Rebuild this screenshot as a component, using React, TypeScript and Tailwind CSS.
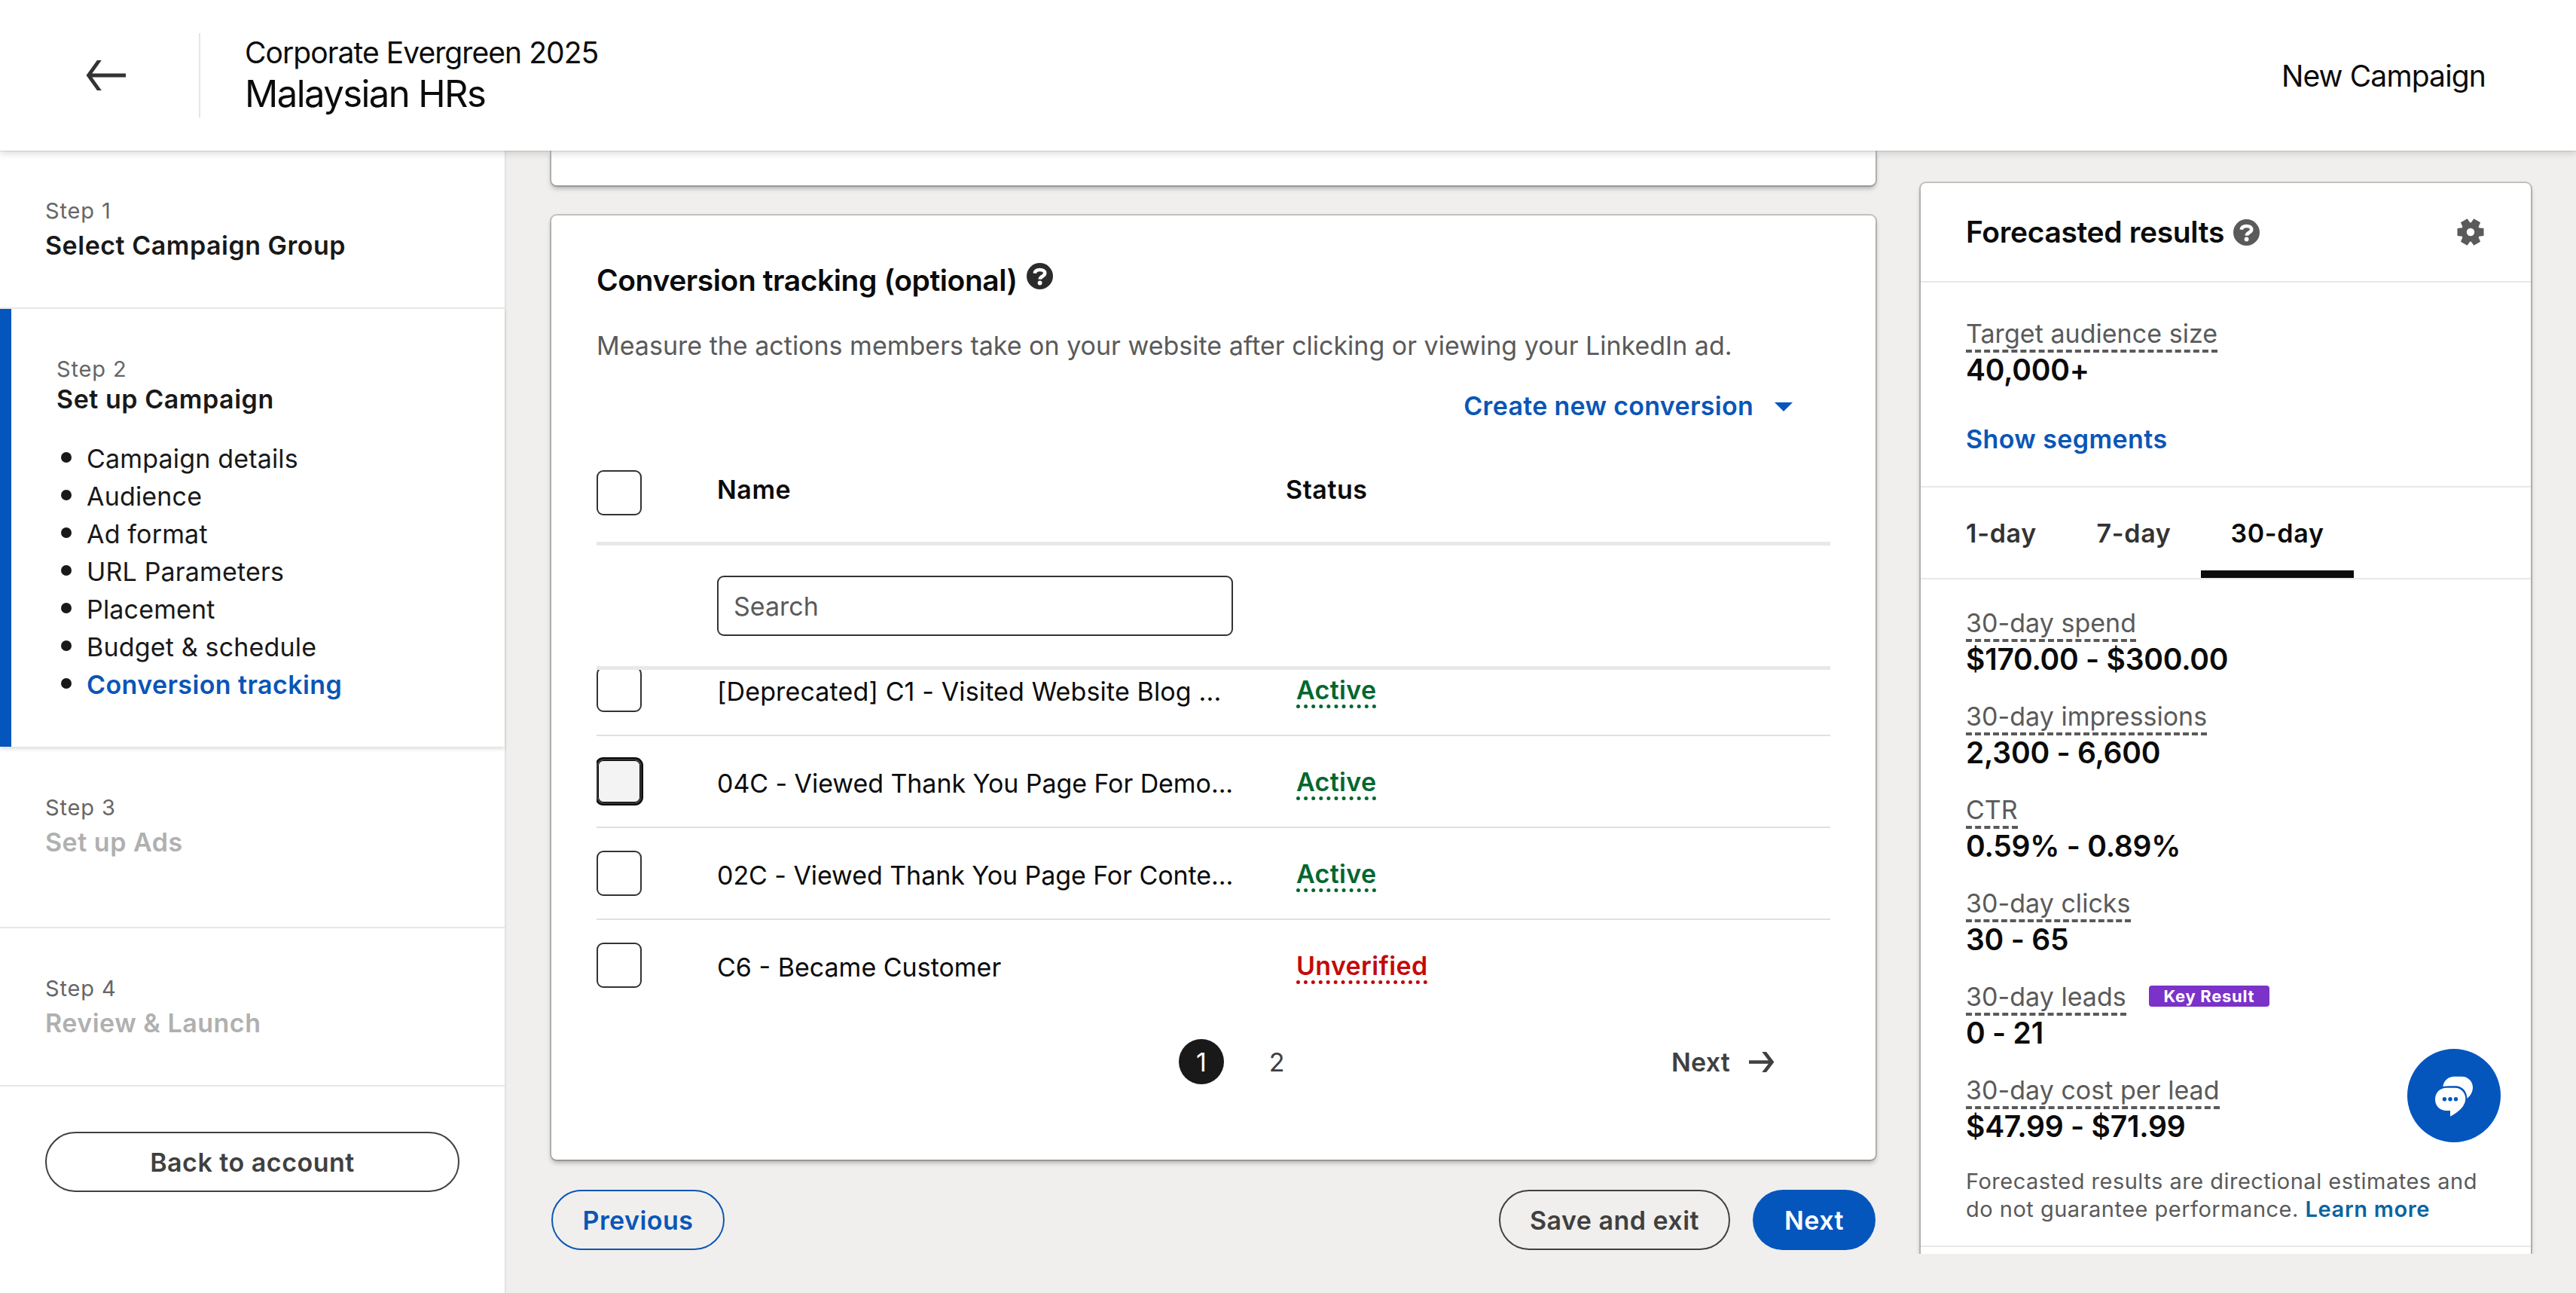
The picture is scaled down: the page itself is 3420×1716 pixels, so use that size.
import React from 'react';
import clsx from 'clsx';

const SECTIONS = [
  'Campaign details',
  'Audience',
  'Ad format',
  'URL Parameters',
  'Placement',
  'Budget & schedule',
  'Conversion tracking',
];

interface Conversion {
  name: string;
  status: 'Active' | 'Unverified';
  focused?: boolean;
}

const CONVERSIONS: Conversion[] = [
  { name: '[Deprecated] C1 - Visited Website Blog ...', status: 'Active' },
  { name: '04C - Viewed Thank You Page For Demo...', status: 'Active', focused: true },
  { name: '02C - Viewed Thank You Page For Conte...', status: 'Active' },
  { name: 'C6 - Became Customer', status: 'Unverified' },
];

interface Metric {
  label: string;
  value: string;
  badge?: string;
}

const METRICS: Metric[] = [
  { label: '30-day spend', value: '$170.00 - $300.00' },
  { label: '30-day impressions', value: '2,300 - 6,600' },
  { label: 'CTR', value: '0.59% - 0.89%' },
  { label: '30-day clicks', value: '30 - 65' },
  { label: '30-day leads', value: '0 - 21', badge: 'Key Result' },
  { label: '30-day cost per lead', value: '$47.99 - $71.99' },
];

const CARD_SHADOW = 'shadow-[0_0_0_2px_rgba(0,0,0,0.18),0_4px_6px_rgba(0,0,0,0.28)]';

const HelpIcon: React.FC<{ className?: string }> = ({ className }) => (
  <svg viewBox="0 0 35 35" className={clsx('size-[35px] shrink-0', className)}>
    <circle cx="17.5" cy="17.5" r="17.5" fill="currentColor" />
    <path d="M10.8 13.8C11.2 10.4 13.8 9 17.6 9c3.9 0 6.6 1.7 6.6 4.7 0 4-6.4 3.9-6.5 7.9" fill="none" stroke="#fff" strokeWidth="4.6" />
    <circle cx="17.6" cy="26.5" r="2.9" fill="#fff" />
  </svg>
);

const GearIcon = () => (
  <svg viewBox="0 0 36 36" className="size-9 text-[#5a5a5a]">
    <g fill="currentColor">
      <circle cx="18" cy="18" r="12.6" />
      <path d="M.5 13 10 12h16l9.5 1v10l-9.5 1H10l-9.5-1z" />
      <path d="M.5 13 10 12h16l9.5 1v10l-9.5 1H10l-9.5-1z" transform="rotate(60 18 18)" />
      <path d="M.5 13 10 12h16l9.5 1v10l-9.5 1H10l-9.5-1z" transform="rotate(120 18 18)" />
    </g>
    <circle cx="18" cy="18" r="5.2" fill="#fff" />
  </svg>
);

const ChatIcon = () => (
  <svg viewBox="0 0 124 124" className="size-[124px]">
    <g fill="#fff">
      <path d="M47.3 50C48.5 42 54.5 36.7 62.5 36.7h10C80.5 36.7 87 43 87 51c0 6-3 11-7.5 14.7C79 56 73 49.3 64 49.3h-8c-3 0-6 .2-8.7.7z" />
      <path d="M52 51.7h11.500C71 51.7 77.3 58 77.3 66c0 10-9.3 18-20.3 23.7V82h-5c-9 0-15-6.5-15-15 0-9 6.5-15.3 15-15.3z" />
    </g>
    <g fill="#0456bd">
      <circle cx="49.4" cy="66.7" r="2.7" />
      <circle cx="57" cy="66.7" r="2.7" />
      <circle cx="64.5" cy="66.7" r="2.7" />
    </g>
  </svg>
);

const Checkbox: React.FC<{ focused?: boolean }> = ({ focused }) => (
  <div
    className={clsx(
      'size-[60px] shrink-0 rounded-[9px] border-2 border-[#333]',
      focused && 'bg-[#f3f3f3] shadow-[0_0_0_2px_#0a0a0a,inset_0_0_0_1px_#0a0a0a]'
    )}
  />
);

const Header = () => (
  <header className="relative z-20 flex h-[200px] shrink-0 items-center bg-white pl-[114px] pr-[120px] shadow-[0_0_0_1px_rgba(0,0,0,0.1),0_4px_9px_rgba(0,0,0,0.14)]">
    <svg viewBox="0 0 53 40" className="h-10 w-[53px] text-[#333]" fill="none" stroke="currentColor" strokeWidth="4.8">
      <path d="M20-3 3.5 20 20 43M3 20h50" />
    </svg>
    <div className="ml-[97px] h-28 w-0.5 bg-[#e6e6e6]" />
    <div className="ml-[59px] text-[#0b0b0b]">
      <div className="text-[39px] leading-[50px] tracking-[-0.024em]">Corporate Evergreen 2025</div>
      <div className="text-[49px] leading-[60px] tracking-[-0.032em]">Malaysian HRs</div>
    </div>
    <div className="ml-auto pt-0.5 text-[39px] leading-[50px] tracking-[-0.022em] text-[#0b0b0b]">New Campaign</div>
  </header>
);

const StepText: React.FC<{ step: string; title: string; disabled?: boolean }> = ({ step, title, disabled }) => (
  <>
    <div className="text-[29px] leading-10 tracking-[0.03em] text-[#666]">{step}</div>
    <div className={clsx('text-[34px] font-semibold leading-[51px] tracking-[0.015em]', disabled ? 'text-[#b0b0b0]' : 'text-[#191919]')}>
      {title}
    </div>
  </>
);

const Sidebar = () => (
  <aside className="w-[670px] shrink-0 bg-white shadow-[0_0_0_2px_rgba(0,0,0,0.05)]">
    <div className="h-[210px] border-b-2 border-[#e8e8e8] pl-[60px] pt-[60px]">
      <StepText step="Step 1" title="Select Campaign Group" />
    </div>
    <div className="h-[581px] border-l-[15px] border-[#0456bd] pl-[60px] pt-[60px] shadow-[0_3px_5px_rgba(0,0,0,0.13)]">
      <div className="text-[29px] leading-10 tracking-[0.03em] text-[#666]">Step 2</div>
      <div className="text-[34px] font-semibold leading-[39px] tracking-[0.016em] text-[#191919]">Set up Campaign</div>
      <ul className="mt-[35px]">
        {SECTIONS.map((section) => (
          <li key={section} className="flex h-[50px] items-center text-[34px] leading-[50px] text-[#191919]">
            <span className="mb-1 ml-1.5 mr-5 size-3.5 rounded-full bg-[#191919]" />
            <span className={section === 'Conversion tracking' ? 'font-semibold tracking-[0.012em] text-[#0a56b6]' : 'tracking-[0.005em]'}>
              {section}
            </span>
          </li>
        ))}
      </ul>
    </div>
    <div className="h-[241px] border-b-2 border-[#e8e8e8] pl-[60px] pt-[61px]">
      <StepText step="Step 3" title="Set up Ads" disabled />
    </div>
    <div className="h-[210px] border-b-2 border-[#e8e8e8] pl-[60px] pt-[60px]">
      <StepText step="Step 4" title="Review & Launch" disabled />
    </div>
    <div className="px-[60px] pt-[60px]">
      <button className="h-20 w-full rounded-full border-2 border-[#404040] text-[34px] font-semibold tracking-[0.015em] text-[#404040]">
        Back to account
      </button>
    </div>
  </aside>
);

const ConversionTable = () => (
  <div className="mt-[60px]">
    <div className="grid h-[100px] grid-cols-[160px_755px_1fr] border-b-[5px] border-[#e8e8e8] text-[34px] font-semibold leading-[52px] tracking-[0.016em] text-[#0b0b0b]">
      <Checkbox />
      <span>Name</span>
      <span>Status</span>
    </div>
    <div className="h-[165px] border-b-[5px] border-[#e8e8e8] pl-40 pt-10">
      <input
        placeholder="Search"
        className="block h-20 w-[685px] rounded-[9px] border-2 border-[#333] pl-5 text-[34px] placeholder:text-[#5a5a5a]"
      />
    </div>
    {/* the list is scrolled a little, so the first row is cut at the top */}
    <div className="h-[454px] overflow-hidden">
      <div className="-mt-[34px]">
        {CONVERSIONS.map((row) => (
          <div
            key={row.name}
            className="grid h-[122px] grid-cols-[160px_769px_1fr] items-start border-b-2 border-[#e0e0e0] text-[34px] last:border-transparent"
          >
            <div className="pt-[30px]">
              <Checkbox focused={row.focused} />
            </div>
            <span
              className={clsx(
                'whitespace-nowrap pt-[38px] leading-[50px] text-[#0b0b0b]',
                row.name.startsWith('[') ? 'tracking-[0.004em]' : row.name.endsWith('...') && 'tracking-[-0.002em]'
              )}
            >
              {row.name}
            </span>
            <span
              className={clsx(
                'mt-[41px] justify-self-start border-b-[5px] border-dotted font-semibold leading-[39px] tracking-[0.010em]',
                row.status === 'Active' ? 'border-[#01672f] text-[#01672f]' : 'border-[#c30a0a] text-[#c30a0a]'
              )}
            >
              {row.status}
            </span>
          </div>
        ))}
      </div>
    </div>
    <div className="mt-9 flex h-[60px] items-center pl-[773px] pr-[74px] text-[34px] text-[#404040]">
      <span className="flex size-[60px] items-center justify-center rounded-full bg-[#191919] text-white">1</span>
      <span className="ml-10 flex size-[60px] items-center justify-center">2</span>
      <span className="ml-auto font-semibold tracking-[0.006em]">Next</span>
      <svg viewBox="0 0 34 27" className="ml-[25px] h-[27px] w-[34px]" fill="none" stroke="currentColor" strokeWidth="4.6">
        <path d="M0 13.5h31M19-1.500l11.500 15L19 28.5" />
      </svg>
    </div>
  </div>
);

const MainColumn = () => (
  <main className="ml-[62px] w-[1758px] shrink-0">
    <div className={clsx('h-[46px] rounded-b-[7px] bg-white', CARD_SHADOW)} />
    <section className={clsx('mt-10 h-[1253px] rounded-[7px] bg-white px-[60px] pt-[61px]', CARD_SHADOW)}>
      <div className="flex items-center">
        <h2 className="text-[39px] font-semibold leading-[50px] tracking-[-0.011em] text-[#0b0b0b]">Conversion tracking (optional)</h2>
        <HelpIcon className="mb-3 ml-3 text-[#2b2b2b]" />
      </div>
      <p className="mt-[37px] whitespace-nowrap text-[34px] leading-[50px] text-[#5a5a5a]">
        Measure the actions members take on your website after clicking or viewing your LinkedIn ad.
      </p>
      <div className="mt-[30px] flex items-center justify-end pr-[50px]">
        <span className="text-[34px] font-semibold leading-[50px] tracking-[0.009em] text-[#0a56b6]">Create new conversion</span>
        <svg viewBox="0 0 24 12" className="ml-7 mt-0.5 h-3 w-6" fill="#0456bd">
          <path d="M0 0h24L12 12z" />
        </svg>
      </div>
      <ConversionTable />
    </section>
    <div className="mt-10 flex text-[34px] font-semibold tracking-[0.014em]">
      <button className="h-20 w-[230px] rounded-full border-2 border-[#0a56b6] text-[#0a56b6]">Previous</button>
      <button className="ml-auto h-20 w-[307px] rounded-full border-2 border-[#404040] text-[#404040]">Save and exit</button>
      <button className="ml-[30px] h-20 w-[163px] rounded-full bg-[#0456bd] text-white">Next</button>
    </div>
  </main>
);

const MetricRow: React.FC<{ metric: Metric }> = ({ metric }) => (
  <div>
    <div className="flex items-start">
      <span className="border-b-4 border-dashed border-[#5a5a5a] text-[34px] leading-[43px] tracking-[0.001em] text-[#5a5a5a]">
        {metric.label}
      </span>
      {metric.badge && (
        <span className="ml-[30px] mt-[7px] flex h-7 w-40 items-center justify-center rounded bg-[#7a32c9] text-[22px] font-bold leading-7 tracking-[0.032em] text-white">
          {metric.badge}
        </span>
      )}
    </div>
    <div className="text-[39px] font-semibold leading-[46px] tracking-[-0.006em] text-[#0b0b0b]">{metric.value}</div>
  </div>
);

const ForecastPanel = () => (
  <aside className="h-[1464px] overflow-hidden px-[60px] pt-[43px]">
    <div className={clsx('h-[1440px] w-[810px] rounded-[7px] bg-white', CARD_SHADOW)}>
      <div className="flex h-[132px] items-center border-b-2 border-[#e8e8e8] pl-[60px] pr-[62px]">
        <h3 className="text-[39px] font-semibold tracking-[-0.009em] text-[#0b0b0b]">Forecasted results</h3>
        <HelpIcon className="ml-3 text-[#5a5a5a]" />
        <div className="ml-auto">
          <GearIcon />
        </div>
      </div>
      <div className="h-[272px] border-b-2 border-[#e8e8e8] pl-[60px] pt-[46px]">
        <MetricRow metric={{ label: 'Target audience size', value: '40,000+' }} />
        <div className="mt-[43px] text-[34px] font-semibold leading-[51px] tracking-[0.012em] text-[#0a56b6]">Show segments</div>
      </div>
      <div className="flex h-[122px] border-b-2 border-[#e8e8e8] pl-5 text-[34px] font-semibold tracking-[0.02em] text-[#333]">
        <div className="flex w-[174px] items-center justify-center">1-day</div>
        <div className="flex w-[178px] items-center justify-center">7-day</div>
        <div className="flex w-[203px] items-center justify-center border-b-[10px] border-[#0b0b0b] pt-2.5 text-[#0b0b0b]">30-day</div>
      </div>
      <div className="border-b-2 border-[#e8e8e8] pb-[30px] pl-[60px] pt-9">
        <div className="flex flex-col gap-[31px]">
          {METRICS.map((metric) => (
            <MetricRow key={metric.label} metric={metric} />
          ))}
        </div>
        <p className="mt-[31px] whitespace-nowrap text-[29px] leading-[37px] tracking-[0.017em] text-[#5a5a5a]">
          Forecasted results are directional estimates and
          <br />
          do not guarantee performance. <span className="font-semibold tracking-[0.022em] text-[#0b64a0]">Learn more</span>
        </p>
      </div>
    </div>
  </aside>
);

export default function App() {
  return (
    <div className="relative flex h-[1716px] w-[3420px] flex-col overflow-hidden bg-[#f0efed] font-['Inter',sans-serif]">
      <Header />
      <div className="flex min-h-0 flex-1">
        <Sidebar />
        <MainColumn />
        <ForecastPanel />
      </div>
      <button className="absolute right-[100px] top-[1392px] z-10 size-[124px] rounded-full bg-[#0456bd]">
        <ChatIcon />
      </button>
    </div>
  );
}
